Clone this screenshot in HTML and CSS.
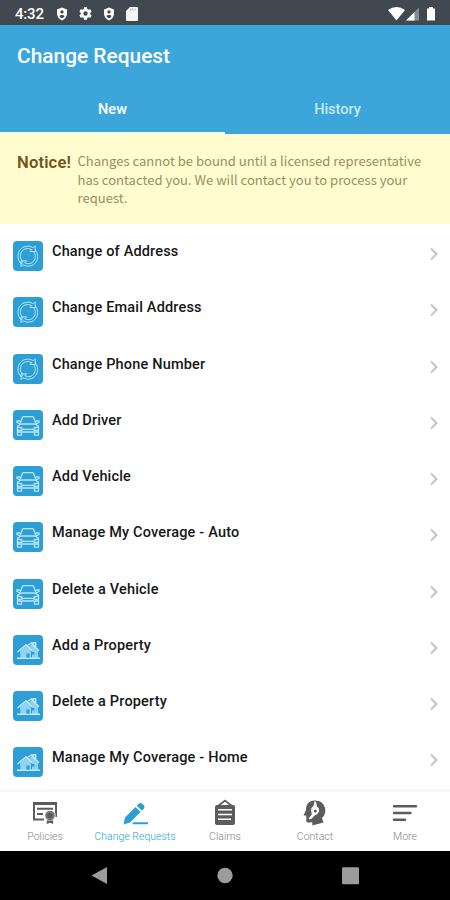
FILE: index.html
```html
<!DOCTYPE html>
<html lang="en">
<head>
<meta charset="utf-8">
<title>Change Request</title>
<link rel="stylesheet" href="styles.css">
</head>
<body>
<svg class="defs" aria-hidden="true">
  <symbol id="shield" viewBox="0 0 12 14"><path fill="#fff" fill-rule="evenodd" d="M6 .5 11 2.4V6.5C11 9.8 9 12.300 6 13.400 3 12.300 1 9.800 1 6.500V2.400ZM6 3.200A1.700 1.700 0 1 0 6 6.600 1.700 1.700 0 0 0 6 3.200ZM3.500 9C4 10.200 5 11 6 11.300 7 11 8 10.200 8.500 9 7.500 7.700 4.500 7.700 3.500 9Z"/></symbol>
  <symbol id="sync" viewBox="0 0 30 30"><g fill="none" stroke="#b4e2f8" stroke-width="1" stroke-linejoin="round"><path d="M8.500 23A10.300 10.300 0 0 1 11 5.800Q16 3.800 20.500 6.600L22.300 5V10.500H17L18.800 8.600Q15 6.700 11.900 8A7.800 7.800 0 0 0 9.700 20.700Z"/><path d="M22.500 9.200A10.300 10.300 0 0 1 19 24.600Q14 26.300 10 23.800L8 25.500V19.800H13.500L11.700 21.700Q15 23.600 18.100 22.300A7.800 7.800 0 0 0 21 11Z"/></g></symbol>
  <symbol id="car" viewBox="0 0 30 30"><g fill="none" stroke="#b9e6fb" stroke-width="1.300" stroke-linejoin="round"><path d="M7 13.500 9.500 7.300Q9.800 6.600 10.800 6.600h8.400q1 0 1.300.7L23 13.500M8.500 14h13l4 2v6H4.500v-6ZM7 14l-3-1.500V11h3M23 14l3-1.500V11h-3M4.500 22v3.200h4V22M21.500 22v3.200h4V22M9 19.300h12M4.500 17l4.500 1v2.300H4.500M25.500 17l-4.500 1v2.300h4.500"/></g></symbol>
  <symbol id="home" viewBox="0 0 30 30"><path fill="#8fd2f2" d="M7 16 13 10.500l5 5v8H7.500Zm9-5 4-2.500 5 6v9h-6v-8Z"/><g fill="none" stroke="#c4e9fb" stroke-width="1.400"><path d="M4.500 17 13 9.700l6 6M14.500 10.500 18.500 8l7.500 8M4 23.300h23M20 9V7.700h2.700V12"/></g><path fill="#2d9ed3" d="M13.500 18.500h3v4.300h-3ZM19 17h2.500v2.500H19Z"/></symbol>
  <symbol id="chev" viewBox="0 0 10 16"><path d="M2 2.500 7.500 8 2 13.500" fill="none" stroke="#c3c3c5" stroke-width="1.900"/></symbol>
</svg>
<div class="screen">
  <div class="status">
    <span class="time">4:32</span>
    <svg class="s-shield"><use href="#shield"/></svg>
    <svg class="s-gear" viewBox="0 0 24 24"><path fill="#fff" d="M19.430 12.980c.04-.32.07-.64.07-.98s-.03-.66-.07-.98l2.110-1.650c.19-.15.24-.42.120-.64l-2-3.460c-.12-.22-.39-.3-.61-.22l-2.490 1c-.52-.4-1.080-.73-1.690-.98l-.38-2.650C14.460 2.180 14.250 2 14 2h-4c-.25 0-.46.180-.49.420l-.38 2.650c-.61.250-1.170.59-1.690.98l-2.490-1c-.23-.09-.49 0-.61.220l-2 3.460c-.13.220-.07.490.12.640l2.110 1.650c-.04.320-.07.650-.07.980s.03.660.07.980l-2.110 1.650c-.19.150-.24.420-.12.640l2 3.460c.12.220.39.300.61.220l2.490-1c.52.400 1.080.730 1.690.980l.38 2.650c.03.240.240.420.49.420h4c.25 0 .46-.18.49-.42l.38-2.650c.61-.25 1.170-.59 1.690-.98l2.490 1c.23.090.49 0 .61-.22l2-3.460c.12-.22.070-.49-.12-.64zM12 15.500a3.500 3.500 0 1 1 0-7 3.500 3.500 0 0 1 0 7z"/></svg>
    <svg class="s-shield"><use href="#shield"/></svg>
    <svg class="s-card" viewBox="0 0 12 14"><path fill="#f4f4f4" d="M4 0h7a1 1 0 0 1 1 1v12a1 1 0 0 1-1 1H1a1 1 0 0 1-1-1V4Z"/><path stroke="#bbb" d="M4.500 1.500v2M6.700 1.500v2M9 1.500v2"/></svg>
    <svg class="s-right" viewBox="0 0 50 16"><path fill="#fff" d="M0 4Q8.500-2 17 4L8.500 14.500Z"/><path fill="#858a90" d="M18 14.500 31 1.500v13Z"/><path fill="#fff" d="M18 14.500 26.500 6v8.500ZM39 2.500h2V1h4v1.500h2v12h-8Z"/></svg>
  </div>
  <header class="header">
    <h1>Change Request</h1>
    <div class="tabs"><div class="tab active">New</div><div class="tab">History</div></div>
  </header>
  <div class="notice"><strong>Notice!</strong><p>Changes cannot be bound until a licensed representative<br>has contacted you. We will contact you to process your<br>request.</p></div>
  <main class="list">
    <div class="row"><svg class="tile"><use href="#sync"/></svg><span>Change of Address</span><svg class="chev"><use href="#chev"/></svg></div>
    <div class="row"><svg class="tile"><use href="#sync"/></svg><span>Change Email Address</span><svg class="chev"><use href="#chev"/></svg></div>
    <div class="row"><svg class="tile"><use href="#sync"/></svg><span>Change Phone Number</span><svg class="chev"><use href="#chev"/></svg></div>
    <div class="row"><svg class="tile"><use href="#car"/></svg><span>Add Driver</span><svg class="chev"><use href="#chev"/></svg></div>
    <div class="row"><svg class="tile"><use href="#car"/></svg><span>Add Vehicle</span><svg class="chev"><use href="#chev"/></svg></div>
    <div class="row"><svg class="tile"><use href="#car"/></svg><span>Manage My Coverage - Auto</span><svg class="chev"><use href="#chev"/></svg></div>
    <div class="row"><svg class="tile"><use href="#car"/></svg><span>Delete a Vehicle</span><svg class="chev"><use href="#chev"/></svg></div>
    <div class="row"><svg class="tile"><use href="#home"/></svg><span>Add a Property</span><svg class="chev"><use href="#chev"/></svg></div>
    <div class="row"><svg class="tile"><use href="#home"/></svg><span>Delete a Property</span><svg class="chev"><use href="#chev"/></svg></div>
    <div class="row"><svg class="tile"><use href="#home"/></svg><span>Manage My Coverage - Home</span><svg class="chev"><use href="#chev"/></svg></div>
  </main>
  <nav class="nav">
    <div class="item"><svg viewBox="0 0 28 28"><g fill="none" stroke="#5c5c5c" stroke-width="2"><path d="M13 20.500H3V4h22v14M3 5h22M6 9.800h16M6 15h6"/></g><circle cx="19" cy="16.500" r="5.200" fill="#5c5c5c" stroke="#fff" stroke-width="1"/><circle cx="19" cy="16.500" r="3.600" fill="none" stroke="#999" stroke-width=".7"/><path fill="#5c5c5c" d="M15.800 21.500h6.400v3.500L19 23.700 15.800 25Z"/></svg><span>Policies</span></div>
    <div class="item on"><svg viewBox="0 0 28 28"><path fill="#2c9fd6" d="M2.500 25.500 4 18.500 14.500 8l5 5L9 23.500ZM15.800 6.700l2-2q1.700-1.500 3.400 0l1.600 1.600q1.500 1.700 0 3.400l-2 2ZM12.500 23.300H27v2H11Z"/></svg><span>Change Requests</span></div>
    <div class="item"><svg viewBox="0 0 28 28"><path fill="#5c5c5c" fill-rule="evenodd" d="M6 6h16q2 0 2 2v16q0 2-2 2H6q-2 0-2-2V8q0-2 2-2Zm1 4v1.500h14V10Zm0 4.800v1.500h14v-1.500ZM7 19.500V21h13v-1.500Z"/><path d="m7 7 7-5.500L21 7" fill="none" stroke="#5c5c5c" stroke-width="1.700"/></svg><span>Claims</span></div>
    <div class="item"><svg viewBox="0 0 28 28"><path fill="#5c5c5c" d="M14 1.500C7.500 1.500 5 5.500 5 11L2.500 16.500H5.300V22q0 1.500 2 1.500l4-.3V26.500l11.200-3-1.500-4.500C27 14.500 25 1.500 14 1.500Z"/><path d="M14.300 2.500 13 7.500q-3 1.500-2 5.200l.5 3L8.200 20" fill="none" stroke="#fff" stroke-width="1.300"/><path fill="#fff" d="m13.300 3.500h2l.5 4q3 2 2.200 5-1 3-4 3.800l-4 4-1.500-1.200 3.300-4.100q-1.800-4.500 1-7Z"/><circle cx="14.300" cy="12" r="1.500" fill="#5c5c5c"/></svg><span>Contact</span></div>
    <div class="item"><svg viewBox="0 0 28 28"><path d="M3 7.200h22M3 14h16.500M3 20.800h11" stroke="#5c5c5c" stroke-width="2.400" stroke-linecap="round"/></svg><span>More</span></div>
  </nav>
  <div class="system"><svg viewBox="0 0 450 49"><g fill="#9c9c9c"><path d="M91.500 24.500 107 16v17Z"/><circle cx="225" cy="24.500" r="7.700"/><rect x="342" y="16.200" width="17" height="17" rx="1.300"/></g></svg></div>
</div>
</body>
</html>
```
FILE: styles.css
```css
* { box-sizing: border-box; }
body { margin: 0; background: #fff; font-family: Roboto, sans-serif; }
svg { display: block; flex: none; }
.defs { display: none; }
.screen { width: 450px; height: 900px; display: flex; flex-direction: column; overflow: hidden; }
.status { height: 25px; flex: none; background: #424850; display: flex; align-items: center; padding: 2px 12px 0 15px; }
.time { color: #fff; font-size: 15px; font-weight: 500; width: 41px; letter-spacing: -.2px; }
.s-shield { width: 12px; height: 14px; }
.s-gear { width: 15px; height: 15px; margin: 0 10px 0 10px; }
.s-card { width: 12px; height: 14px; margin-left: 11px; }
.s-right { width: 50px; height: 16px; margin-left: auto; }
.header { height: 109px; flex: none; background: #3ca6db; color: #fff; display: flex; flex-direction: column; }
h1 { margin: 0; height: 60px; padding: 0 17px; font-size: 20.9px; line-height: 62px; font-weight: 500; }
.tabs { display: flex; flex: 1; }
.tab { flex: 1; text-align: center; font-size: 14.5px; font-weight: 500; line-height: 50px; height: 49px; color: #c6e8f8; border-bottom: 2px solid transparent; }
.tab.active { color: #fff; border-bottom-color: #f4fbfa; }
.notice { height: 90px; flex: none; background: #fffccf; display: flex; padding: 18px 0 0 17px; color: #75531c; }
.notice strong { width: 60.5px; font-size: 16.6px; line-height: 21px; font-weight: 600; letter-spacing: .15px; white-space: nowrap; }
.notice p { margin: 0; font-family: "Noto Sans CJK SC", sans-serif; font-size: 13.05px; line-height: 18.5px; color: #9b8e63; white-space: nowrap; }
.list { height: 565px; flex: none; padding-top: 4px; }
.row { height: 56.25px; display: flex; align-items: center; padding: 0 11px 0 13px; }
.tile { width: 30px; height: 30px; border-radius: 4px; background: #2d9fd4; }
.row span { flex: 1; margin: -8px 0 0 9px; font-size: 14.5px; font-weight: 500; letter-spacing: .17px; line-height: 20px; color: #171717; white-space: nowrap; }
.chev { width: 10px; height: 16px; margin-top: -4px; }
.nav { height: 62px; flex: none; border-top: 3px solid #f8f8f8; display: flex; }
.item { flex: 1; display: flex; flex-direction: column; align-items: center; padding-top: 7px; color: #858585; font-size: 10.5px; line-height: 14px; white-space: nowrap; }
.item svg { width: 28px; height: 28px; }
.item span { margin-top: 3px; font-weight: 300; }
.item.on { color: #2c9fd6; }
.system { flex: 1; background: #000; }
.system svg { width: 450px; height: 49px; }
```
